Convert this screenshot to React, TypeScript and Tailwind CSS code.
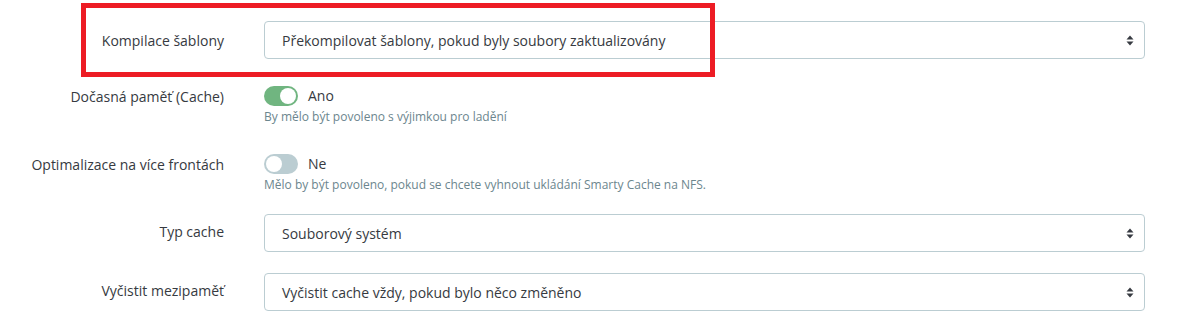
import React from 'react';

const font = { fontFamily: '"Open Sans", "Noto Sans", sans-serif' };

function Caret() {
  return (
    <svg width="8" height="11" viewBox="0 0 8 11" className="shrink-0">
      <path d="M4 0.5 L7.5 4.5 H0.5 Z" fill="#363a41" />
      <path d="M4 10.5 L7.5 6.5 H0.5 Z" fill="#363a41" />
    </svg>
  );
}

function Select({ value }: { value: string }) {
  return (
    <div className="flex h-[38px] w-[881px] items-center justify-between rounded-[4px] border border-[#bbcdd2] bg-white pl-[17px] pr-[10px] text-[14px] text-[#363a41]">
      <span>{value}</span>
      <Caret />
    </div>
  );
}

function Toggle({ on }: { on: boolean }) {
  return (
    <div className={'relative h-[20px] w-[34px] rounded-full ' + (on ? 'bg-[#70b580]' : 'bg-[#bbcdd2]')}>
      <div className={'absolute top-[2px] h-[16px] w-[16px] rounded-full bg-white ' + (on ? 'right-[2px]' : 'left-[2px]')} />
    </div>
  );
}

function Label({ children }: { children: React.ReactNode }) {
  return <div className="w-[224px] shrink-0 text-right text-[14px] text-[#363a41]">{children}</div>;
}

export default function App() {
  return (
    <div className="relative h-[335px] w-[1200px] overflow-hidden bg-white" style={font}>
      {/* row 1 */}
      <div className="mt-[21px] flex items-center">
        <Label>Kompilace šablony</Label>
        <div className="ml-[40px]">
          <Select value="Překompilovat šablony, pokud byly soubory zaktualizovány" />
        </div>
      </div>

      {/* row 2 */}
      <div className="mt-[26px] flex items-start">
        <div className="flex h-[20px] items-center pt-[2px]">
          <Label>Dočasná paměť (Cache)</Label>
        </div>
        <div className="ml-[40px]">
          <div className="flex items-center gap-[10px]">
            <Toggle on />
            <span className="text-[14px] text-[#363a41]">Ano</span>
          </div>
          <div className="mt-[2px] text-[12px] leading-[18px] text-[#6c868e]">By mělo být povoleno s výjimkou pro ladění</div>
        </div>
      </div>

      {/* row 3 */}
      <div className="mt-[27px] flex items-start">
        <div className="flex h-[20px] items-center pt-[2px]">
          <Label>Optimalizace na více frontách</Label>
        </div>
        <div className="ml-[40px]">
          <div className="flex items-center gap-[10px]">
            <Toggle on={false} />
            <span className="text-[14px] text-[#363a41]">Ne</span>
          </div>
          <div className="mt-[2px] text-[12px] leading-[18px] text-[#6c868e]">
            Mělo by být povoleno, pokud se chcete vyhnout ukládání Smarty Cache na NFS.
          </div>
        </div>
      </div>

      {/* row 4 */}
      <div className="mt-[20px] flex items-center">
        <div className="-mt-[3px]">
          <Label>Typ cache</Label>
        </div>
        <div className="ml-[40px]">
          <Select value="Souborový systém" />
        </div>
      </div>

      {/* row 5 */}
      <div className="mt-[21px] flex items-center">
        <div className="-mt-[3px]">
          <Label>Vyčistit mezipaměť</Label>
        </div>
        <div className="ml-[40px]">
          <Select value="Vyčistit cache vždy, pokud bylo něco změněno" />
        </div>
      </div>

      {/* annotation box */}
      <div className="pointer-events-none absolute left-[81px] top-[3px] h-[74px] w-[634px] border-[5px] border-[#ed1c24]" />
    </div>
  );
}
